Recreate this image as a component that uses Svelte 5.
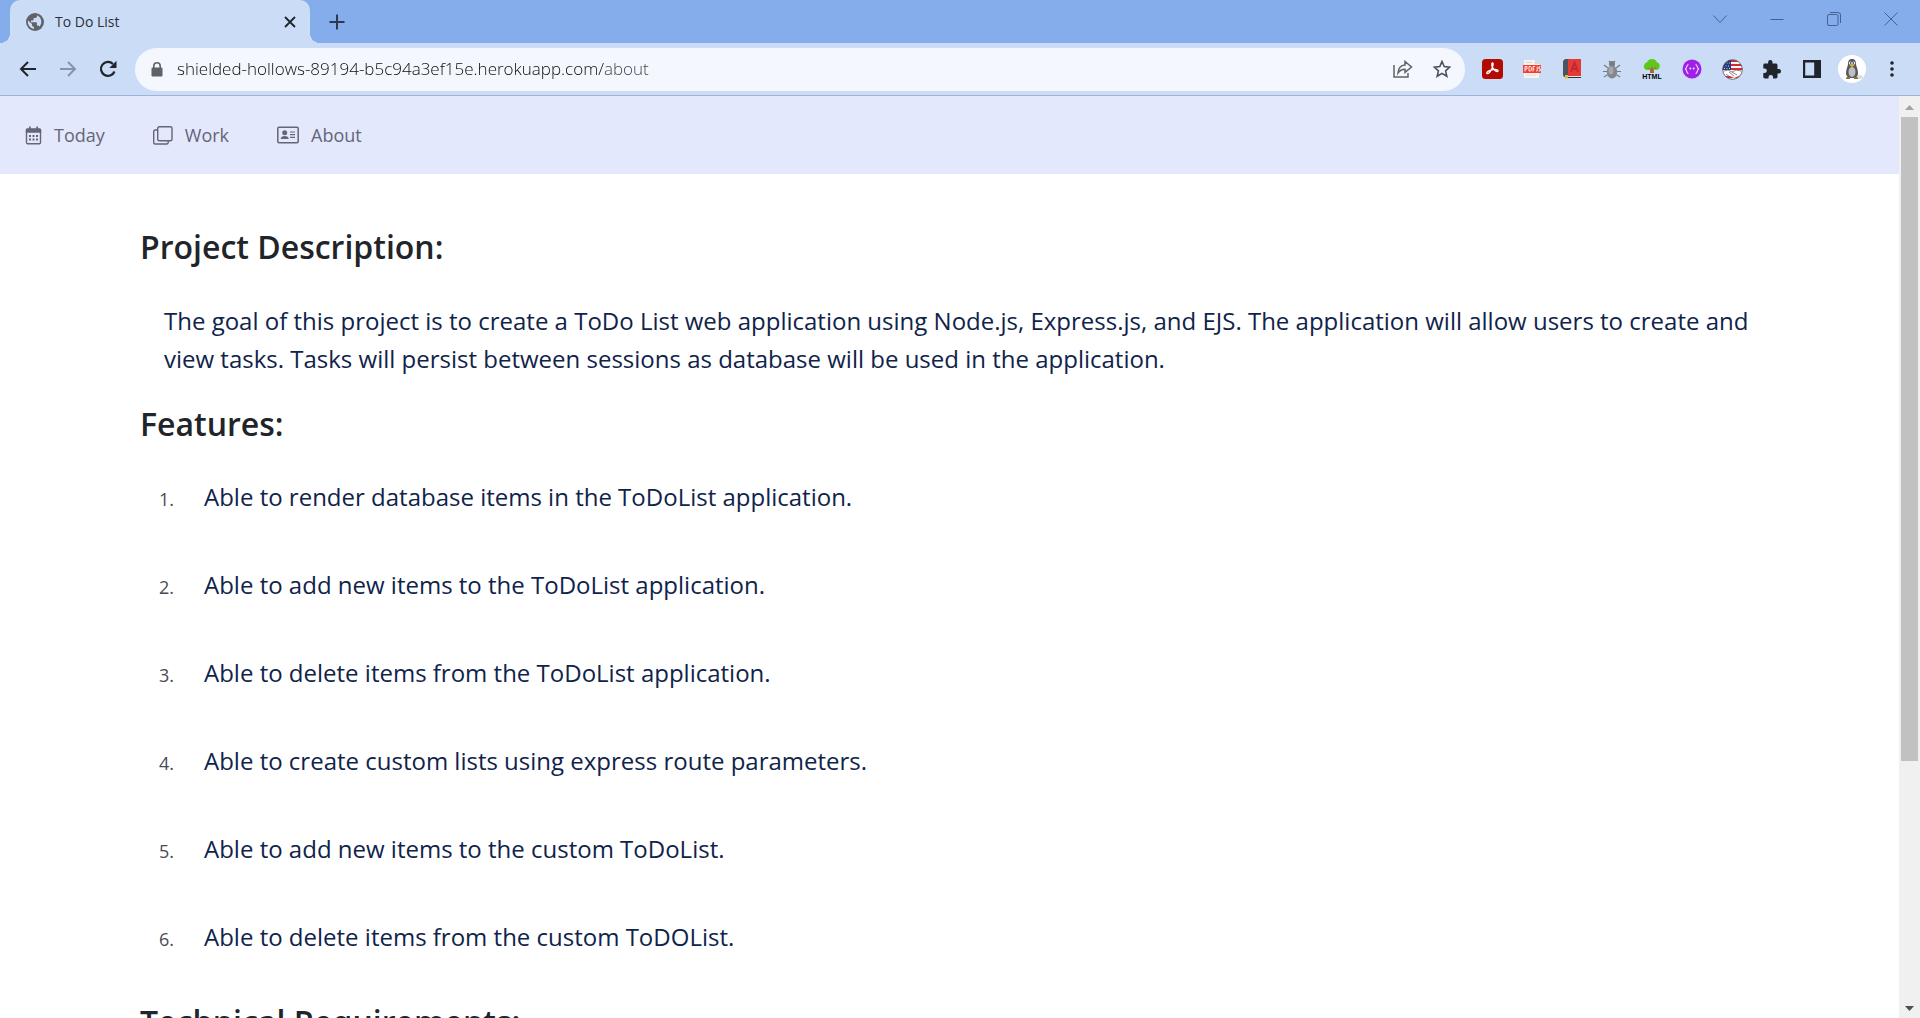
<script>
  const features = [
    'Able to render database items in the ToDoList application.',
    'Able to add new items to the ToDoList application.',
    'Able to delete items from the ToDoList application.',
    'Able to create custom lists using express route parameters.',
    'Able to add new items to the custom ToDoList.',
    'Able to delete items from the custom ToDOList.'
  ];
  let address = $state('shielded-hollows-89194-b5c94a3ef15e.herokuapp.com/about');
</script>

<div class="window">
  <header class="browser">
    <div class="tabstrip">
      <div class="tab">
        <svg class="globe" width="18" height="18" viewBox="0 0 18 18">
          <circle cx="9" cy="9" r="9" fill="#5f6368" />
          <path d="M2 7.500 6 11v1.800l2 1.400v1.900A7.200 7.200 0 0 1 2 7.500ZM11 2.200v1c0 1-.8 1.700-1.700 1.700H7.600v1.700c0 .5-.4.9-.9.900H5v1.700h5c.5 0 .9.400.9.900V12.600h.8c.8 0 1.400.5 1.600 1.200A7.200 7.200 0 0 0 11 2.200Z" fill="#cbdcf6" />
        </svg>
        <span class="tab-title">To Do List</span>
        <button class="tab-close" aria-label="Close tab">
          <svg width="12" height="12" viewBox="0 0 12 12"><path d="m1 1 10 10M11 1 1 11" stroke="#20242b" stroke-width="1.800" /></svg>
        </button>
      </div>
      <button class="new-tab" aria-label="New tab">
        <svg width="16" height="16" viewBox="0 0 16 16"><path d="M8 .5v15M.5 8h15" stroke="#2c3a52" stroke-width="2" /></svg>
      </button>
      <div class="controls">
        <button aria-label="Search tabs"><svg width="14" height="14" viewBox="0 0 14 14"><path d="m.5 3.500 6.500 7 6.500-7" /></svg></button>
        <button aria-label="Minimize"><svg width="14" height="14" viewBox="0 0 14 14"><path d="M.5 7.500h13" /></svg></button>
        <button aria-label="Restore"><svg width="14" height="14" viewBox="0 0 14 14"><rect x=".5" y="2.500" width="10.500" height="11" rx="1.500" /><path d="M3 .5h8a2.500 2.500 0 0 1 2.500 2.500v8" /></svg></button>
        <button aria-label="Close"><svg width="14" height="14" viewBox="0 0 14 14"><path d="m.5.5 13 13m0-13-13 13" /></svg></button>
      </div>
    </div>

    <div class="toolbar">
      <div class="tools">
        <button aria-label="Back"><svg width="18" height="16" viewBox="0 0 18 16"><path d="M17 8H2M9 1 2 8l7 7" fill="none" stroke="#20242b" stroke-width="2" /></svg></button>
        <button aria-label="Forward"><svg width="18" height="16" viewBox="0 0 18 16"><path d="M1 8h15M9 1l7 7-7 7" fill="none" stroke="#8893a8" stroke-width="2" /></svg></button>
        <button aria-label="Reload"><svg width="18" height="18" viewBox="0 0 18 18"><path d="M15.500 11.500A7 7 0 1 1 14 4" fill="none" stroke="#20242b" stroke-width="2.200" /><path d="M17.500.8v7.200h-7.200Z" fill="#20242b" /></svg></button>
      </div>
      <div class="omnibox">
        <svg class="lock" width="12" height="15" viewBox="0 0 12 15"><path d="M2.800 6V4a3.200 3.200 0 0 1 6.400 0v2" fill="none" stroke="#5f6368" stroke-width="1.600" /><rect x=".5" y="5.500" width="11" height="9" rx="1.200" fill="#5f6368" /></svg>
        <input class="url" type="text" aria-label="Address" bind:value={address} />
        <button aria-label="Share this page"><svg width="20" height="18" viewBox="0 0 20 18"><path d="M1 5v12h14v-4M5 13c.4-5 3-7.600 7-7.900V1.500L18.500 7 12 12.400V9.200C9 9.300 6.800 10.400 5 13Z" fill="none" stroke="#5f6368" stroke-width="1.500" /></svg></button>
        <button aria-label="Bookmark this page"><svg width="18" height="18" viewBox="0 0 18 18"><path d="m9 1.500 2.200 5.100 5.600.5-4.200 3.700 1.200 5.500L9 13.400l-4.800 2.900 1.200-5.500L1.200 7.100l5.600-.5Z" fill="none" stroke="#4d5157" stroke-width="1.600" /></svg></button>
      </div>
      <div class="tools">
        <button aria-label="PDF reader">
          <svg width="21" height="20" viewBox="0 0 21 20"><rect width="21" height="20" rx="3.500" fill="#b30b00" /><path d="M5 14.500c-1.400-1.300 3-3.600 6.300-3.900 3.600-.4 5.400.6 4.700 1.600-1 1.200-4.600-1.400-5.700-4.100-.8-2.200-.6-4.300.3-4.200 1.300.2-.1 4.700-1.500 7.300-1.300 2.400-3.200 4-4.100 3.300Z" fill="none" stroke="#fff" stroke-width="1.300" /></svg>
        </button>
        <button aria-label="PDF JS">
          <svg width="20" height="20" viewBox="0 0 20 20"><path d="M2 1h11l4 4v14H2Z" fill="#f5f3ee" /><path d="M13 1v4h4Z" fill="#d8d4cc" /><path d="M4 16h10M4 3.500h6" stroke="#dedad2" /><rect x="1" y="6" width="18" height="8" fill="#ef3e30" /><path d="M3 12.500v-5h2v2.500H3M7 7.500v4.500h1.500l.8-1V8.500l-.8-1ZM11 12.500v-5h2M11 10h1.500M15.200 7.500v4.500h-1M18.500 7.800h-1.600v2h1.400V12h-1.600" fill="none" stroke="#fff" stroke-width=".9" /></svg>
        </button>
        <button aria-label="Dictionary">
          <svg width="18" height="20" viewBox="0 0 18 20"><path d="M0 2 2 0h15v18H1l-1-2Z" fill="#4b5560" /><path d="M5 0h13v17H5Z" fill="#e63a36" /><path d="M2 17h16v2H2Z" fill="#30343a" /><path d="M3 17h15v1H3Z" fill="#e9e6df" /><path d="m8 13 3.500-9.500L15 13M9.300 10h4.500" fill="none" stroke="#b92c2c" stroke-width="1.800" /><path d="M2 16v4l1.500-1L5 20v-4Z" fill="#e3b93e" /></svg>
        </button>
        <button aria-label="Bug">
          <svg width="18" height="19" viewBox="0 0 18 19"><path d="m6 1 2 2m4-2-2 2M1 5l4 3M17 5l-4 3M0 11.500h4M18 11.500h-4M1 17l4-2.500M17 17l-4-2.500" fill="none" stroke="#777b82" stroke-width="1.200" /><circle cx="9" cy="4" r="3" fill="#777b82" /><ellipse cx="9" cy="12" rx="5.200" ry="6.500" fill="#84878c" /><ellipse cx="8" cy="10.500" rx="2.500" ry="4" fill="#a5a7aa" /></svg>
        </button>
        <button class="html-tree" aria-label="HTML tree">
          <svg width="20" height="14" viewBox="0 0 20 14"><path d="M8.500 6h3l.5 8H8Z" fill="#a8672d" /><path d="M5 11a3.500 3.500 0 0 1-2.500-5.500C3 4 4 3.500 5 3.500 5.500 1 8 0 10 0s4.500 1 5 3.500c1 0 2.400.8 2.700 2.500C18 9 16.500 11 14 11c-1.500 0-2.500-1.500-4-3-1.500 1.500-3 3-5 3Z" fill="#5fc61d" /><path d="m10 13-4-4.500M10 12l4-4" stroke="#a8672d" /></svg>
          <span>HTML</span>
        </button>
        <button aria-label="JSON viewer">
          <svg width="20" height="20" viewBox="0 0 20 20"><circle cx="10" cy="10" r="9.500" fill="#a020e8" /><path d="M6.500 5.500C4 5.500 5.500 9.500 3 10c2.500.5 1 4.500 3.500 4.500M13.500 5.500c2.500 0 1 4 3.500 4.500-2.500.5-1 4.500-3.500 4.500" fill="none" stroke="#f3dcff" stroke-width="1.200" /><circle cx="8.300" cy="9.500" r="1" fill="#f3dcff" /><circle cx="11.700" cy="9.500" r="1" fill="#f3dcff" /></svg>
        </button>
        <button aria-label="English">
          <svg width="21" height="21" viewBox="0 0 21 21"><defs><clipPath id="disc"><circle cx="10.500" cy="10.500" r="9.800" /></clipPath></defs><g clip-path="url(#disc)"><path d="M0 0h21v21H0Z" fill="#fff" /><path d="M0 2h21M0 6h21M0 10h21M0 18h21" stroke="#d52b35" stroke-width="2" /><path d="M0 0h9v11H0Z" fill="#233a7d" /><path d="M2 4h6M1 7h7M2 9.500h6" stroke="#cdd4ea" stroke-dasharray="1 1.500" /><path d="m1 12 4-1 5 1 4-1 6 1-3 5-5 2-6-3Z" fill="#fff" /></g><path d="m2 12 4-1 4 2 4-2 5 1M4 15l4 3M7 13l5 4M10 13l5 3" fill="none" stroke="#71656a" stroke-width=".8" /><circle cx="10.500" cy="10.500" r="9.800" fill="none" stroke="#5a4450" stroke-width=".8" /></svg>
        </button>
        <button aria-label="Extensions">
          <svg width="19" height="19" viewBox="0 0 19 19"><path d="M15.800 9H14.500V5.200c0-1-.8-1.700-1.700-1.700H9.500V2.300a2.200 2.200 0 0 0-4.400 0v1.200H2C1 3.500.3 4.200.3 5.200v3.200h1.200a2.300 2.300 0 0 1 0 4.700H.3v3.700c0 1 .7 1.700 1.700 1.700h3.500v-1.200a2.300 2.300 0 0 1 4.600 0v1.200h2.700c1 0 1.700-.8 1.700-1.700v-3.300h1.300a2.250 2.250 0 0 0 0-4.500Z" fill="#20242b" /></svg>
        </button>
        <button aria-label="Side panel">
          <svg width="18" height="18" viewBox="0 0 18 18"><path d="M0 0h18v18H0Z" fill="#20242b" /><path d="M2.200 2.500h9v13h-9Z" fill="#cbdcf6" /></svg>
        </button>
        <button aria-label="Profile">
          <svg width="28" height="28" viewBox="0 0 28 28"><circle cx="14" cy="14" r="14" fill="#fff" /><ellipse cx="20" cy="22" rx="5" ry="2" fill="#ddd" /><path d="M14 4c-3 0-4 2-4 5 0 2-2 5-2 9 0 3 2 5 6 5s6-2 6-5c0-4-2-7-2-9 0-3-1-5-4-5Z" fill="#55585c" /><ellipse cx="14" cy="17" rx="3.500" ry="5" fill="#bdbfc1" /><circle cx="12.300" cy="8" r="1.500" fill="#fff" /><circle cx="15.700" cy="8" r="1.500" fill="#fff" /><circle cx="12.500" cy="8" r=".7" /><circle cx="15.500" cy="8" r=".7" /><path d="M11.500 10.200 14 9l2.500 1.200L14 12Z" fill="#eeb321" /><path d="M8 23.500c0-2 3-2.500 4.500.5H8.500ZM20 23.500c0-2-3-2.500-4.500.5h4Z" fill="#8a6a28" /></svg>
        </button>
        <button aria-label="Menu">
          <svg width="4" height="16" viewBox="0 0 4 16"><circle cx="2" cy="2" r="1.800" fill="#20242b" /><circle cx="2" cy="8" r="1.800" fill="#20242b" /><circle cx="2" cy="14" r="1.800" fill="#20242b" /></svg>
        </button>
      </div>
    </div>
  </header>

  <div class="viewport">
    <div class="page">
      <nav>
        <a href="#today">
          <svg width="17" height="19" viewBox="0 0 17 19"><path d="M1.500 5h14v11.500a1.200 1.200 0 0 1-1.200 1.200H2.700a1.200 1.200 0 0 1-1.200-1.200Z" fill="none" stroke="currentColor" stroke-width="1.400" /><path d="M.8 4A1.500 1.500 0 0 1 2.300 2.300H4V.5h1.700v1.800h5.600V.5H13v1.800h1.700A1.500 1.500 0 0 1 16.200 4v2.700H.8Z" fill="currentColor" /><path d="M4 10h9M4 13.500h9" stroke="currentColor" stroke-width="2" stroke-dasharray="2 1.500" /></svg>
          Today
        </a>
        <a href="#work">
          <svg width="20" height="19" viewBox="0 0 20 19"><rect x="4.700" y=".7" width="14.300" height="14" rx="1.500" fill="none" stroke="currentColor" stroke-width="1.400" /><path d="M4.500 4H2.200a1.500 1.500 0 0 0-1.500 1.500v11A1.500 1.500 0 0 0 2.200 18h11.500a1.500 1.500 0 0 0 1.500-1.500v-1.800" fill="none" stroke="currentColor" stroke-width="1.400" /></svg>
          Work
        </a>
        <a href="#about">
          <svg width="22" height="18" viewBox="0 0 22 18"><rect x=".8" y="1.200" width="20.400" height="15.600" rx="1.200" fill="none" stroke="currentColor" stroke-width="1.500" /><circle cx="7.700" cy="6.800" r="2.500" fill="currentColor" /><path d="M3.700 13c0-2 1.500-3 4-3s4 1 4 3Z" fill="currentColor" /><path d="M13 6h5M13 8.700h5M13 11.400h5" stroke="currentColor" stroke-width="1.200" /></svg>
          About
        </a>
      </nav>

      <main>
        <h2>Project Description:</h2>
        <p>
          The goal of this project is to create a ToDo List web application using Node.js, Express.js, and EJS. The
          application will allow users to create and view tasks. Tasks will persist between sessions as database will be
          used in the application.
        </p>
        <h2>Features:</h2>
        <ol>
          {#each features as feature}
            <li>{feature}</li>
          {/each}
        </ol>
        <h2>Technical Requirements:</h2>
      </main>
    </div>
    <div class="scrollbar" aria-hidden="true">
      <svg width="9" height="5" viewBox="0 0 9 5"><path d="M0 5 4.500 0 9 5Z" fill="#a3a3a3" /></svg>
      <div class="track"><div class="thumb"></div></div>
      <svg width="9" height="5" viewBox="0 0 9 5"><path d="M0 0h9L4.500 5Z" fill="#505050" /></svg>
    </div>
  </div>
</div>

<style>
  :global(body) { margin: 0; }
  .window {
    height: 100vh;
    display: flex;
    flex-direction: column;
    overflow: hidden;
    background: #fff;
    font-family: 'Segoe UI', 'Open Sans', 'Noto Sans', sans-serif;
  }
  button {
    display: flex;
    align-items: center;
    justify-content: center;
    padding: 0;
    border: 0;
    background: none;
    font: inherit;
  }
  .tabstrip {
    display: flex;
    height: 43px;
    padding-left: 10px;
    background: #85aceb;
  }
  .tab {
    position: relative;
    display: flex;
    align-items: center;
    box-sizing: border-box;
    width: 300px;
    padding: 0 10px 0 16px;
    gap: 11px;
    border-radius: 10px 10px 0 0;
    background: #cbdcf6;
  }
  .tab::before, .tab::after {
    content: '';
    position: absolute;
    bottom: 0;
    width: 10px;
    height: 10px;
  }
  .tab::before { right: 100%; background: radial-gradient(circle at 0 0, #85aceb 10px, #cbdcf6 10px); }
  .tab::after { left: 100%; background: radial-gradient(circle at 100% 0, #85aceb 10px, #cbdcf6 10px); }
  .tab-title { flex: 1; font-size: 14px; line-height: 20px; color: #2b303a; }
  .tab-close { width: 20px; height: 20px; }
  .new-tab { width: 54px; }
  .controls { display: flex; margin-left: auto; padding-right: 1px; height: 37px; }
  .controls button { width: 57px; }
  .controls svg { fill: none; stroke: #46618f; }

  .toolbar {
    display: flex;
    align-items: center;
    gap: 7px;
    height: 52px;
    padding: 0 8px;
    background: #cbdcf6;
    border-bottom: 1px solid #9db3d8;
  }
  .tools { display: flex; }
  .tools button { width: 40px; height: 40px; }
  .omnibox {
    flex: 1;
    display: flex;
    align-items: center;
    height: 43px;
    padding: 0 4px 0 16px;
    border-radius: 22px;
    background: #f4f7fd;
  }
  .omnibox button { width: 39px; height: 36px; }
  .url {
    flex: 1;
    min-width: 0;
    margin-left: 14px;
    padding: 0;
    border: 0;
    outline: 0;
    font: inherit;
    font-size: 17px;
    font-weight: 300;
    line-height: 24px;
    color: transparent;
    background: linear-gradient(to right, #0c0e12 427px, #3f4348 427px);
    background-clip: text;
    -webkit-background-clip: text;
    caret-color: #23272e;
  }
  .html-tree { flex-direction: column; }
  .html-tree span { font: 900 7px/7px 'Liberation Sans', sans-serif; color: #000; }

  .viewport { flex: 1; display: flex; min-height: 0; }
  .page { flex: 1; min-width: 0; overflow: hidden; }
  nav {
    display: flex;
    align-items: center;
    gap: 48px;
    height: 78px;
    padding: 0 25px;
    background: #e3e8fd;
  }
  nav a {
    display: flex;
    align-items: center;
    gap: 12px;
    font-size: 18px;
    line-height: 27px;
    color: #636676;
    text-decoration: none;
  }
  main { padding: 52px 140px 0; }
  h2 {
    margin: 0;
    font-size: 32px;
    line-height: 42px;
    font-weight: 600;
    color: #212529;
  }
  p {
    margin: 0;
    padding: 34px 8px 25px 24px;
    font-size: 24px;
    line-height: 38px;
    color: #10234a;
  }
  ol {
    margin: 0;
    padding: 8px 0 20px 19px;
    list-style: none;
    counter-reset: feature;
  }
  li {
    display: flex;
    align-items: baseline;
    padding: 24px 0;
    font-size: 24px;
    line-height: 40px;
    color: #10234a;
    counter-increment: feature;
  }
  li::before {
    content: counter(feature) '.';
    width: 45px;
    font-size: 18px;
    line-height: 24px;
    color: #484c52;
  }
  .scrollbar {
    display: flex;
    flex-direction: column;
    align-items: center;
    gap: 7px;
    box-sizing: border-box;
    width: 21px;
    padding: 9px 2px 7px;
    background: #f0f0f0;
  }
  .track { flex: 1; width: 100%; }
  .thumb { height: 73%; background: #c1c1c1; }
</style>
